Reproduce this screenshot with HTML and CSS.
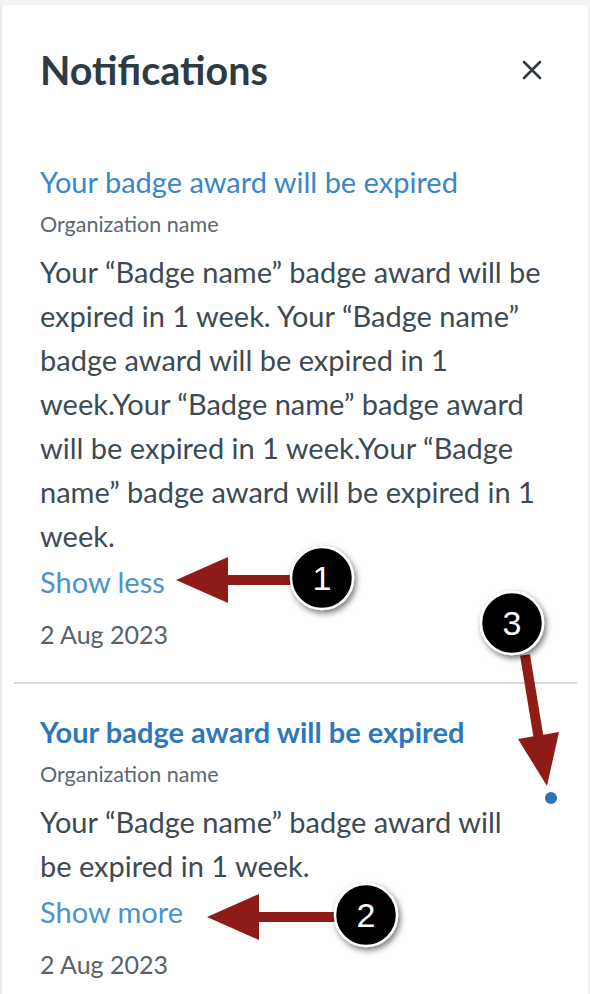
FILE: index.html
```html
<!DOCTYPE html>
<html lang="en">
<head>
<meta charset="utf-8">
<title>Notifications</title>
<link rel="stylesheet" href="styles.css">
</head>
<body>
<div class="page">
  <div class="panel">
    <header class="header">
      <h1 class="heading">Notifications</h1>
      <button class="close" aria-label="Close">
        <svg width="20" height="20" viewBox="0 0 20 20"><path d="M2 2 L18 18 M18 2 L2 18" stroke="#2d3b45" stroke-width="2.6" stroke-linecap="round" fill="none"/></svg>
      </button>
    </header>
    <ul class="list">
      <li class="item">
        <div class="content">
          <a class="title" href="#">Your badge award will be expired</a>
          <div class="org">Organization name</div>
          <p class="body">Your “Badge name” badge award will be expired in 1 week. Your “Badge name” badge award will be expired in 1 week.Your “Badge name” badge award will be expired in 1 week.Your “Badge name” badge award will be expired in 1 week.</p>
          <a class="toggle" href="#">Show less</a>
          <div class="date">2 Aug 2023</div>
        </div>
      </li>
      <li class="item unread">
        <div class="content">
          <a class="title" href="#">Your badge award will be expired</a>
          <div class="org">Organization name</div>
          <p class="body">Your “Badge name” badge award will be expired in 1 week.</p>
          <a class="toggle" href="#">Show more</a>
          <div class="date">2 Aug 2023</div>
        </div>
        <span class="dot"></span>
      </li>
    </ul>
  </div>
  <svg class="annotations" width="590" height="994" viewBox="0 0 590 994">
    <defs>
      <filter id="sh" x="-30%" y="-30%" width="160%" height="160%">
        <feDropShadow dx="2" dy="3" stdDeviation="3" flood-color="#000" flood-opacity="0.55"/>
      </filter>
    </defs>
    <g fill="#8e1b15">
      <rect x="226" y="575" width="66" height="10"/>
      <polygon points="176,580 228,557 228,603"/>
      <rect x="257" y="912" width="78" height="10"/>
      <polygon points="207,917 259,894 259,940"/>
      <line x1="525" y1="655" x2="539" y2="740" stroke="#8e1b15" stroke-width="10"/>
      <polygon points="547,786 518,739 559,732"/>
    </g>
    <g filter="url(#sh)">
      <circle cx="322" cy="578" r="31" fill="#050505" stroke="#fff" stroke-width="2.5"/>
      <circle cx="366" cy="915" r="31" fill="#050505" stroke="#fff" stroke-width="2.5"/>
      <circle cx="512" cy="623" r="31" fill="#050505" stroke="#fff" stroke-width="2.5"/>
    </g>
    <g class="num" fill="#fff" text-anchor="middle">
      <text x="322" y="590">1</text>
      <text x="366" y="927">2</text>
      <text x="512" y="635">3</text>
    </g>
  </svg>
</div>
</body>
</html>
```

FILE: styles.css
```css
* { box-sizing: border-box; }

html, body {
  margin: 0;
  padding: 0;
}

body {
  background: #f3f3f3;
  font-family: Lato, "Open Sans", "Liberation Sans", sans-serif;
  color: #2d3b45;
}

.page {
  position: relative;
  width: 590px;
  height: 994px;
  overflow: hidden;
}

.panel {
  margin-top: 5px;
  min-height: 989px;
  background: #fff;
  border-left: 2px solid #ebebeb;
  border-right: 2px solid #f1f1f1;
}

.header {
  display: flex;
  align-items: center;
  justify-content: space-between;
  padding: 41px 46px 0 38px;
  margin-bottom: 40px;
}

.heading {
  margin: 0;
  font-size: 39.5px;
  line-height: 48px;
  font-weight: 700;
  color: #2d3b45;
}

.close {
  display: flex;
  padding: 0;
  border: 0;
  background: none;
  cursor: pointer;
}

.list {
  list-style: none;
  margin: 0;
  padding: 0;
}

.item {
  display: flex;
  align-items: flex-start;
  margin: 0 11px 0 12px;
  padding: 30px 17px 33px 26px;
}

.item + .item {
  border-top: 2px solid #d6dbdf;
}

.content {
  flex: 1;
  min-width: 0;
}

.title {
  display: block;
  font-size: 29px;
  line-height: 36px;
  color: #3a86c6;
  text-decoration: none;
}

.unread .title {
  font-weight: 700;
  color: #2e78ba;
}

.org {
  margin-top: 10px;
  font-size: 21.5px;
  line-height: 28px;
  color: #5a6770;
}

.body {
  margin: 12px 0 0;
  font-size: 29px;
  line-height: 44px;
  color: #3d4a53;
}

.toggle {
  display: block;
  margin-top: 6px;
  font-size: 29px;
  line-height: 36px;
  color: #4b93cc;
  text-decoration: none;
}

.date {
  margin-top: 19px;
  font-size: 25px;
  line-height: 30px;
  color: #56636c;
}

.dot {
  flex: none;
  width: 12px;
  height: 12px;
  margin: 78px 3px 0 27px;
  border-radius: 50%;
  background: #2d73b8;
}

.annotations {
  position: absolute;
  top: 0;
  left: 0;
  pointer-events: none;
}

.num {
  font-family: "Liberation Sans", Arial, sans-serif;
  font-size: 34px;
}
```
